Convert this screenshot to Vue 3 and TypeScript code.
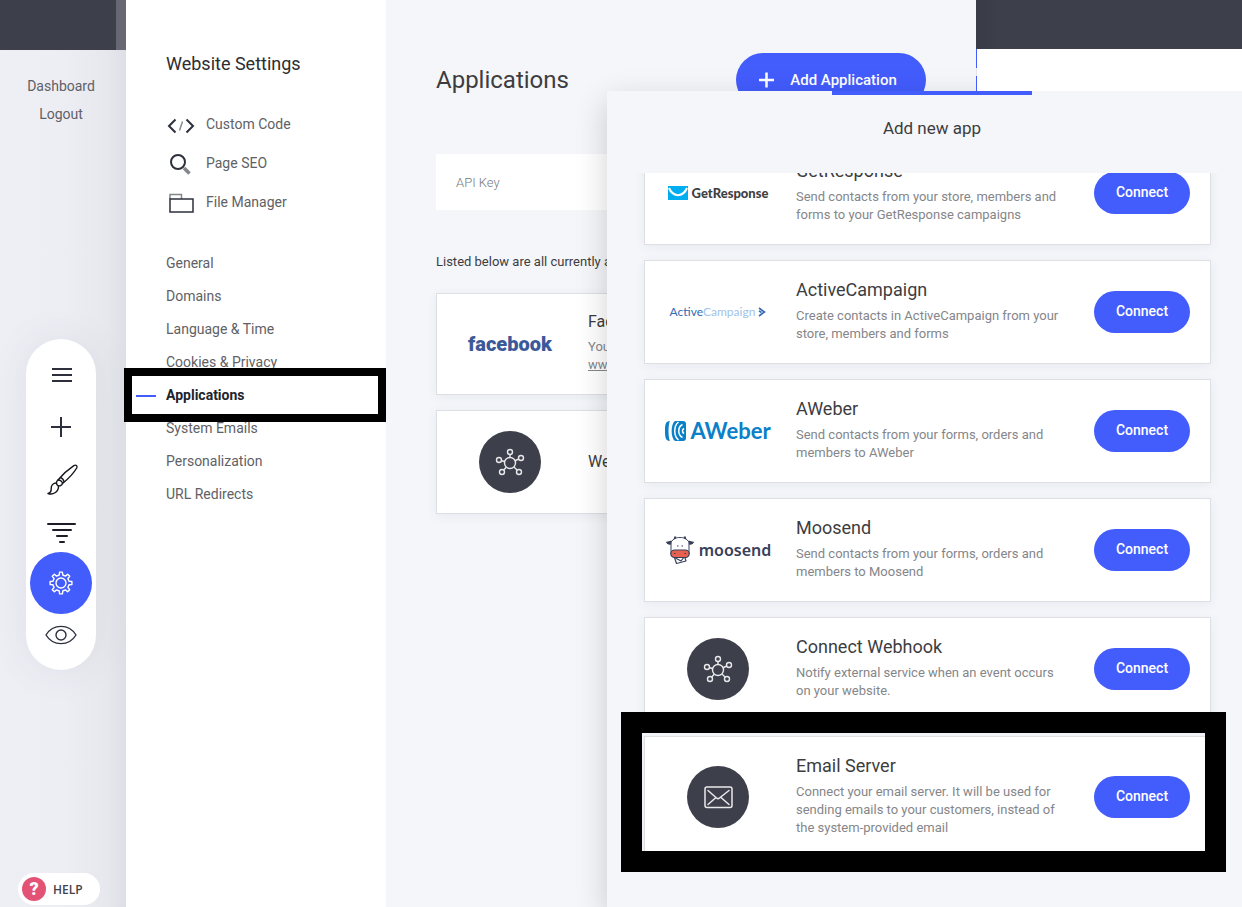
<script setup lang="ts">
interface AppEntry {
  id: string
  title: string
  text: string
  highlighted?: boolean
}

const apps: AppEntry[] = [
  { id: 'getresponse', title: 'GetResponse', text: 'Send contacts from your store, members and forms to your GetResponse campaigns' },
  { id: 'activecampaign', title: 'ActiveCampaign', text: 'Create contacts in ActiveCampaign from your store, members and forms' },
  { id: 'aweber', title: 'AWeber', text: 'Send contacts from your forms, orders and members to AWeber' },
  { id: 'moosend', title: 'Moosend', text: 'Send contacts from your forms, orders and members to Moosend' },
  { id: 'webhook', title: 'Connect Webhook', text: 'Notify external service when an event occurs on your website.' },
  {
    id: 'email',
    title: 'Email Server',
    text: 'Connect your email server. It will be used for sending emails to your customers, instead of the system-provided email',
    highlighted: true,
  },
]

const sections: string[] = [
  'General',
  'Domains',
  'Language & Time',
  'Cookies & Privacy',
  'Applications',
  'System Emails',
  'Personalization',
  'URL Redirects',
]
const current = 'Applications'

const nodes: [number, number][] = [
  [31, 21],
  [42, 27],
  [40, 41],
  [23, 41],
  [20, 29],
]

function gearPath(teeth: number, outer: number, inner: number): string {
  const step = (Math.PI * 2) / teeth
  const points: string[] = []
  for (let i = 0; i < teeth; i++) {
    const a = i * step - Math.PI / 2
    const spots: [number, number][] = [
      [-0.27, inner],
      [-0.17, outer],
      [0.17, outer],
      [0.27, inner],
    ]
    for (const [offset, radius] of spots) {
      const t = a + offset * step
      points.push(`${(12 + Math.cos(t) * radius).toFixed(2)} ${(12 + Math.sin(t) * radius).toFixed(2)}`)
    }
  }
  return `M${points.join('L')}Z`
}
const gear = gearPath(8, 11, 8.2)
</script>

<template>
  <div class="screen">
    <aside class="rail">
      <div class="rail-top"><span class="rail-edge"></span></div>
      <nav class="rail-links" aria-label="Account">
        <a href="#">Dashboard</a>
        <a href="#">Logout</a>
      </nav>
      <div class="pill">
        <button type="button" class="tool" aria-label="Menu">
          <svg width="32" height="32" viewBox="0 0 32 32"><path d="M7 10h20M7 16h20M7 22h20" stroke="#2d303c" stroke-width="2" /></svg>
        </button>
        <button type="button" class="tool" aria-label="Add">
          <svg width="32" height="32" viewBox="0 0 32 32"><path d="M6 16h20M16 6v20" stroke="#2d303c" stroke-width="2" /></svg>
        </button>
        <button type="button" class="tool" aria-label="Design">
          <svg width="32" height="32" viewBox="-1 -1 32 32" overflow="visible" fill="none" stroke="#15161c" stroke-width="1.400" stroke-linejoin="round" stroke-linecap="round">
            <path d="M12 16C16 11 22 5.500 27.500 1.800C30 .2 31.800 1.800 30.700 4C27.500 9.500 22 15 16.500 19.500" />
            <path d="M12 16C9.800 17.500 10.200 20 11.500 21.200C13 22.500 15.500 22 16.500 19.500C16.600 18 14 15.500 12 16Z" />
            <path d="M14.500 13.600C16 14 17.500 15.700 18 17.600" />
            <path d="M10.500 19C7 19 5 21.500 5.200 24.500C5.400 27.500 4 29 2 29.500C6.500 31 12.800 28.500 12.500 22" />
          </svg>
        </button>
        <button type="button" class="tool" aria-label="Sections">
          <svg width="32" height="32" viewBox="0 0 32 32"><path d="M3 9h27M8 15h18M12 21h10M15 27h4" stroke="#1c1d26" stroke-width="2" stroke-linecap="round" /></svg>
        </button>
        <button type="button" class="tool active" aria-label="Settings">
          <svg width="24" height="24" viewBox="0 0 24 24" fill="none" stroke="#fff" stroke-width="1.400" stroke-linejoin="round">
            <path :d="gear" />
            <circle cx="12" cy="12" r="5" />
          </svg>
        </button>
        <button type="button" class="tool" aria-label="Preview">
          <svg width="32" height="32" viewBox="0 0 32 32" fill="none" stroke="#2d303c" stroke-width="1.400" stroke-linejoin="round">
            <path d="M1 16C8 4.500 24 4.500 31 16C24 27.500 8 27.500 1 16Z" />
            <circle cx="16" cy="16" r="5" />
          </svg>
        </button>
      </div>
      <button type="button" class="help"><span class="help-mark">?</span>HELP</button>
    </aside>

    <section class="settings">
      <h2>Website Settings</h2>
      <ul class="tools">
        <li>
          <svg width="30" height="30" viewBox="0 0 30 30" fill="none" stroke="#2d303c" stroke-width="2">
            <path d="M9.500 10.500L3 17l6.500 6.500M20.500 10.500L27 17l-6.500 6.500" />
            <path d="M16.500 12.500l-3 9" stroke="#8a8b92" stroke-width="1.500" />
          </svg>
          <a href="#">Custom Code</a>
        </li>
        <li>
          <svg width="30" height="30" viewBox="0 0 30 30" fill="none" stroke="#2d303c" stroke-width="2">
            <circle cx="12" cy="14" r="7" />
            <path d="M18 20l5.500 5.500" stroke="#85868c" stroke-width="3.500" />
          </svg>
          <a href="#">Page SEO</a>
        </li>
        <li>
          <svg width="30" height="30" viewBox="0 0 30 30" fill="none" stroke="#2d303c" stroke-width="1.500">
            <path d="M4 12V7.500h11.500V12" stroke="#85868c" />
            <path d="M4 12h23v13H4z" />
          </svg>
          <a href="#">File Manager</a>
        </li>
      </ul>
      <ul class="sections">
        <li v-for="name in sections" :key="name" :class="{ current: name === current }">
          <a href="#">{{ name }}</a>
          <span v-if="name === current" class="frame"></span>
        </li>
      </ul>
    </section>

    <main class="content">
      <header class="content-head">
        <h1>Applications</h1>
        <button type="button" class="add">
          <svg width="16" height="16" viewBox="0 0 16 16"><path d="M0 8h15M7.500 .5v15" stroke="#fff" stroke-width="2.500" /></svg>
          Add Application
        </button>
      </header>
      <input class="api-key" type="text" placeholder="API Key" aria-label="API Key" />
      <p class="note">Listed below are all currently active apps</p>
      <article class="card small">
        <div class="logo"><span class="facebook">facebook</span></div>
        <div class="info">
          <h3>Facebook</h3>
          <p>You are connected<br /><a href="#">www.facebook.com</a></p>
        </div>
      </article>
      <article class="card small hook">
        <div class="logo">
          <svg width="62" height="62" viewBox="0 0 62 62" fill="none" stroke="#e9e9ec" stroke-width="1.400">
            <circle cx="31" cy="31" r="31" fill="#3d3f4b" stroke="none" />
            <path d="M31 31V21M31 32l11-5M31 32l9 9M31 32l-8 9M31 32l-11-3" />
            <circle cx="31" cy="32" r="5.500" fill="#3d3f4b" />
            <circle v-for="(n, i) in nodes" :key="i" :cx="n[0]" :cy="n[1]" r="2.500" fill="#3d3f4b" />
          </svg>
        </div>
        <div class="info"><h3>Webhook</h3></div>
      </article>
    </main>

    <div class="page-behind"><div class="page-bar"></div><div class="page-strip"></div></div>

    <section class="dialog" role="dialog" aria-labelledby="dialog-title">
      <header class="dialog-head"><h2 id="dialog-title">Add new app</h2></header>
      <div class="scroller">
        <div class="app-list">
          <article v-for="app in apps" :key="app.id" class="card">
            <div class="logo">
              <div v-if="app.id === 'getresponse'" class="brand getresponse">
                <svg width="20" height="14" viewBox="0 0 20 14" fill="none">
                  <path d="M0 0h20v14H0z" fill="#00aeef" />
                  <path d="M1 2C5 11.500 15 11.500 19 2" stroke="#fff" stroke-width="2" />
                </svg>
                <span>GetResponse</span>
              </div>
              <div v-else-if="app.id === 'activecampaign'" class="brand activecampaign">
                <span>Active<i>Campaign</i></span>
                <svg width="8" height="10" viewBox="0 0 8 10" fill="none" stroke="#356ab0" stroke-width="1.600">
                  <path d="M1 1l5.500 4L1 9M1 3.800l2.500 1.700" />
                </svg>
              </div>
              <div v-else-if="app.id === 'aweber'" class="brand aweber">
                <svg width="22" height="22" viewBox="0 0 22 22" fill="none">
                  <path d="M5 1C.5 1 0 5 0 11s.5 10 5 10C3 18 3 4 5 1Z" fill="#0a80c8" />
                  <path d="M10 1h8q3 0 3 3v14q0 3-3 3h-8C5.500 18 5.500 4 10 1Z" fill="#0a80c8" />
                  <path d="M13.500 2C8.500 6 8.500 16 13.500 20M17.500 4.500C12.500 7 12.500 15 17.500 17.500M19 8.500c-2 1-2 4 0 5" stroke="#fff" stroke-width="1.500" />
                </svg>
                <span>AWeber</span>
              </div>
              <div v-else-if="app.id === 'moosend'" class="brand moosend">
                <svg width="30" height="30" viewBox="0 0 30 30" fill="none" stroke="#39415a" stroke-width="1.200" stroke-linejoin="round">
                  <path d="M6 7C9 3.500 11 2.500 15 2.500s6 1 9 4.500v12H6z" fill="#fff" stroke-width="1" />
                  <path d="M6.500 5.500L.8 7q1.500 3.500 5.200 2.500zM23.500 5.500L29.200 7q-1.500 3.500-5.200 2.500z" fill="#39415a" stroke="none" />
                  <path d="M9.500 4L10.500 1.500M20.500 4L19.500 1.500" stroke-width="2" />
                  <path d="M9.500 22.500l10-1 1.500 4.500-9.500 2.500z" fill="#fff" />
                  <path d="M9.500 22.500l6.500 3.500 3.500-4.500" />
                  <rect x="5.800" y="15" width="18.400" height="7.500" rx="3.700" fill="#e8604f" />
                  <path d="M9 18.500h1.500M19.500 18.500H21M12 11h1.500M16.500 11H18" />
                </svg>
                <span>moosend</span>
              </div>
              <svg v-else-if="app.id === 'webhook'" width="62" height="62" viewBox="0 0 62 62" fill="none" stroke="#e9e9ec" stroke-width="1.400">
                <circle cx="31" cy="31" r="31" fill="#3d3f4b" stroke="none" />
                <path d="M31 31V21M31 32l11-5M31 32l9 9M31 32l-8 9M31 32l-11-3" />
                <circle cx="31" cy="32" r="5.500" fill="#3d3f4b" />
                <circle v-for="(n, i) in nodes" :key="i" :cx="n[0]" :cy="n[1]" r="2.500" fill="#3d3f4b" />
              </svg>
              <svg v-else width="62" height="62" viewBox="0 0 62 62" fill="none" stroke="#e9e9ec" stroke-width="1.500" stroke-linecap="round">
                <circle cx="31" cy="31" r="31" fill="#3d3f4b" stroke="none" />
                <rect x="18" y="21" width="27" height="20.500" rx="2" />
                <path d="M21 24.500l8.500 7.500q1.500 1.300 3 0L42 24.500M21 38.500l8-7M42 38.500l-8-7" />
              </svg>
            </div>
            <div class="info">
              <h3>{{ app.title }}</h3>
              <p>{{ app.text }}</p>
            </div>
            <button type="button" class="connect">Connect</button>
            <span v-if="app.highlighted" class="frame"></span>
          </article>
        </div>
      </div>
    </section>
  </div>
</template>

<style>
body {
  margin: 0;
}
</style>

<style scoped>
* {
  box-sizing: border-box;
}
.screen {
  position: relative;
  display: grid;
  grid-template-columns: 126px 260px minmax(0, 590px) 1fr;
  height: 100vh;
  overflow: hidden;
  background: #f4f6fa;
  font-family: Roboto, "Liberation Sans", sans-serif;
  font-size: 14px;
  color: #3d3d3f;
}
h1,
h2,
h3,
p,
ul {
  margin: 0;
  padding: 0;
  font-weight: 400;
}
ul {
  list-style: none;
}
a {
  color: inherit;
  text-decoration: none;
}
button {
  border: 0;
  padding: 0;
  font-family: inherit;
  cursor: pointer;
}
svg {
  display: block;
}

.rail {
  display: flex;
  flex-direction: column;
  background: linear-gradient(90deg, #eeeff5 0, #edeef4 50%, #e6e8ed 85%, #dcdfe5 100%);
}
.rail-top {
  display: flex;
  justify-content: flex-end;
  height: 50px;
  background: #3d3f4b;
}
.rail-edge {
  width: 10px;
  background: #676873;
}
.rail-links {
  display: flex;
  flex-direction: column;
  align-items: center;
  padding: 22px 4px 0 0;
  line-height: 28px;
  color: #5f6066;
}
.pill {
  display: flex;
  flex-direction: column;
  align-items: center;
  width: 70px;
  margin: 211px 0 0 26px;
  padding: 10px 0 9px;
  border-radius: 35px;
  background: #fff;
  box-shadow: 0 0 40px rgba(60, 65, 90, 0.08);
}
.tool {
  display: flex;
  align-items: center;
  justify-content: center;
  width: 62px;
  height: 52px;
  background: none;
}
.tool.active {
  height: 62px;
  margin: -5px 0;
  border-radius: 50%;
  background: #435cfc;
}
.help {
  display: flex;
  align-items: center;
  gap: 7px;
  width: 82px;
  height: 32px;
  margin: auto 0 2px 18px;
  padding: 0 4px;
  border-radius: 16px;
  background: #fff;
  color: #42434b;
  font: 600 12px "Open Sans", sans-serif;
}
.help-mark {
  width: 24px;
  border-radius: 50%;
  background: #e35375;
  color: #fff;
  font: 900 18px/24px Roboto, sans-serif;
  text-align: center;
}

.settings {
  position: relative;
  z-index: 1;
  padding: 52px 0 0 40px;
  background: #fff;
}
.settings h2 {
  color: #2d2d30;
  font-size: 18px;
  line-height: 24px;
}
.tools {
  margin: 28px 0 26px;
  color: #606166;
}
.tools li {
  display: flex;
  align-items: center;
  gap: 10px;
  height: 39px;
}
.sections {
  color: #606166;
}
.sections li {
  position: relative;
  line-height: 33px;
}
.sections .current {
  color: #22232b;
  font-weight: 700;
}
.sections .current::before {
  position: absolute;
  top: 16px;
  left: -30px;
  width: 20px;
  height: 2px;
  background: #435cfc;
  content: "";
}
.sections .frame {
  position: absolute;
  inset: -11px 0 -10px -42px;
  border: 8px solid #000;
}

.content {
  padding: 53px 50px 0;
  background: #f4f6fa;
}
.content-head {
  display: flex;
  align-items: center;
  justify-content: space-between;
}
h1 {
  font-size: 24px;
  line-height: 32px;
}
.add {
  display: flex;
  align-items: center;
  justify-content: center;
  gap: 15px;
  width: 190px;
  height: 54px;
  padding-right: 6px;
  border-radius: 27px;
  background: #435cfc;
  color: #fff;
  font-size: 15px;
  font-weight: 500;
}
.api-key {
  display: block;
  width: 100%;
  height: 56px;
  margin: 47px 0 42px;
  padding: 0 20px;
  border: 0;
  background: #fff;
  font: 300 13px Roboto, sans-serif;
}
.api-key::placeholder {
  color: #77787d;
}
.note {
  margin-bottom: 21px;
  font-size: 13px;
  line-height: 20px;
}

.card {
  position: relative;
  display: grid;
  grid-template-columns: 146px 270px 1fr;
  gap: 5px;
  align-items: center;
  border: 1px solid #dddfe3;
  background: #fff;
  box-shadow: 0 2px 10px rgba(60, 65, 90, 0.07);
}
.logo {
  display: flex;
  justify-content: center;
}
.info {
  padding: 17px 0 20px;
}
.info h3 {
  margin-bottom: 5px;
  font-size: 18px;
  line-height: 24px;
}
.info p {
  color: #85868a;
  font-size: 13px;
  line-height: 18px;
}
.small h3 {
  font-size: 16px;
  line-height: 22px;
}
.small a {
  text-decoration: underline;
}
.small.hook {
  height: 104px;
  margin-top: 15px;
}
.hook .info {
  padding: 0;
}
.hook h3 {
  margin: 0;
}
.facebook {
  color: #3b5998;
  font: 900 20px/24px Roboto, sans-serif;
}

.page-behind {
  position: relative;
  z-index: 3;
  height: 91px;
  background: #fff;
}
.page-bar {
  height: 49px;
  background: linear-gradient(90deg, #393b46 0, #3d3f4b 24px);
}
.page-strip {
  width: 1px;
  height: 42px;
  background: linear-gradient(#435cfc 0 19px, #e5e6ea 19px 27px, #435cfc 27px);
}

.dialog {
  position: absolute;
  z-index: 2;
  top: 91px;
  right: -15px;
  bottom: 0;
  left: 607px;
  display: flex;
  flex-direction: column;
  background: #f4f6fa;
  box-shadow: 0 10px 30px rgba(0, 0, 0, 0.18);
}
.dialog-head {
  height: 82px;
  flex: none;
  text-align: center;
}
.dialog-head::before {
  display: block;
  width: 200px;
  height: 4px;
  margin: 0 auto 21px;
  background: #435cfc;
  content: "";
}
.dialog-head h2 {
  font-size: 17px;
  line-height: 24px;
}
.scroller {
  flex: 1;
  min-height: 0;
  overflow: hidden;
}
.app-list {
  display: flex;
  flex-direction: column;
  gap: 15px;
  margin: -32px 46px 0 37px;
}
.connect {
  justify-self: end;
  width: 96px;
  height: 42px;
  margin-right: 20px;
  padding-bottom: 2px;
  border-radius: 21px;
  background: #435cfc;
  color: #fff;
  font-size: 14px;
  font-weight: 500;
}
.app-list .frame {
  position: absolute;
  inset: -25px -16px -15px -24px;
  border: 21px solid #000;
}

.brand {
  display: flex;
  align-items: center;
}
.getresponse {
  gap: 4px;
  color: #414042;
  font: 900 13px/20px Lato, sans-serif;
}
.activecampaign {
  gap: 3px;
  color: #356ab0;
  font: 400 12px/16px Lato, sans-serif;
}
.activecampaign i {
  color: #9fc3e8;
  font-style: normal;
}
.aweber {
  gap: 3px;
  color: #0a80c8;
  font: 700 22px/28px Lato, sans-serif;
}
.moosend {
  gap: 4px;
  color: #39415a;
  font: 600 16px/24px "Noto Sans", sans-serif;
}
</style>
